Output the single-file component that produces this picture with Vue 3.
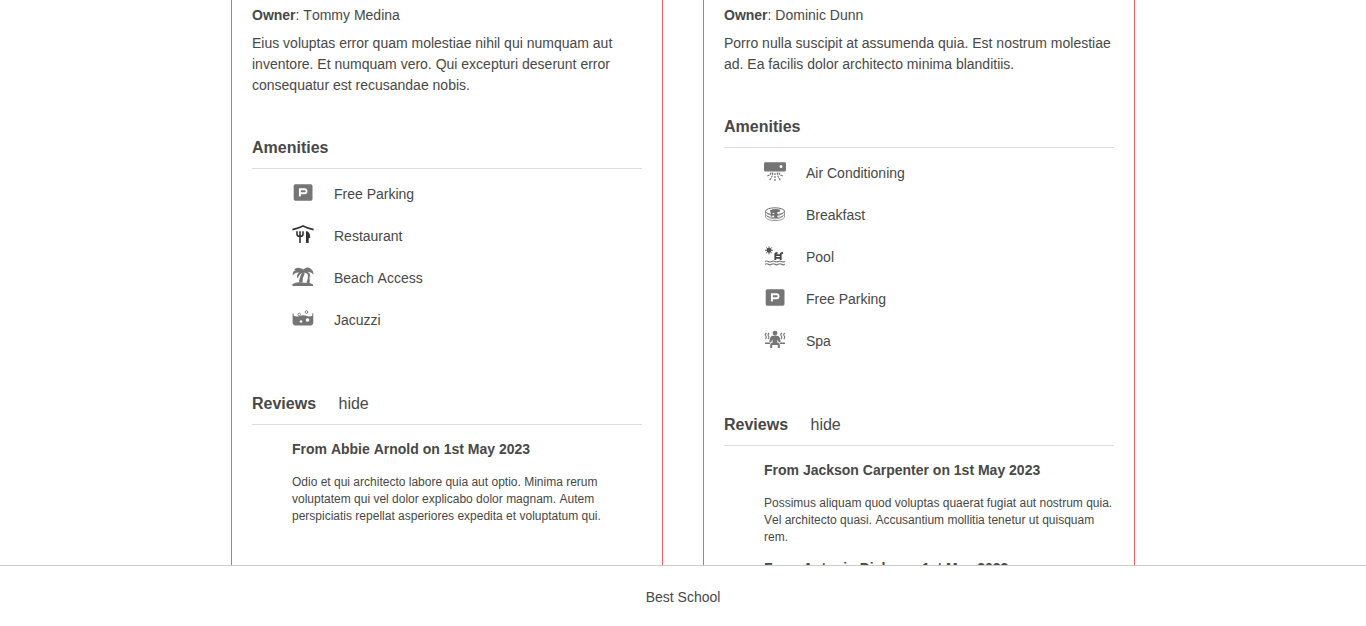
<script setup>
const places = [
  {
    owner: 'Tommy Medina',
    text: 'Eius voluptas error quam molestiae nihil qui numquam aut inventore. Et numquam vero. Qui excepturi deserunt error consequatur est recusandae nobis.',
    amenities: [
      ['parking', 'Free Parking'],
      ['restaurant', 'Restaurant'],
      ['beach', 'Beach Access'],
      ['jacuzzi', 'Jacuzzi'],
    ],
    reviews: [
      {
        title: 'From Abbie Arnold on 1st May 2023',
        text: 'Odio et qui architecto labore quia aut optio. Minima rerum voluptatem qui vel dolor explicabo dolor magnam. Autem perspiciatis repellat asperiores expedita et voluptatum qui.',
      },
    ],
  },
  {
    owner: 'Dominic Dunn',
    text: 'Porro nulla suscipit at assumenda quia. Est nostrum molestiae ad. Ea facilis dolor architecto minima blanditiis.',
    amenities: [
      ['air', 'Air Conditioning'],
      ['breakfast', 'Breakfast'],
      ['pool', 'Pool'],
      ['parking', 'Free Parking'],
      ['spa', 'Spa'],
    ],
    reviews: [
      {
        title: 'From Jackson Carpenter on 1st May 2023',
        text: 'Possimus aliquam quod voluptas quaerat fugiat aut nostrum quia. Vel architecto quasi. Accusantium mollitia tenetur ut quisquam rem.',
      },
      { title: 'From Antonio Dicks on 1st May 2023', text: '' },
    ],
  },
]
</script>

<template>
  <div class="page">
    <main class="places">
      <article v-for="place in places" :key="place.owner" class="place">
        <p class="owner"><b>Owner</b>: {{ place.owner }}</p>
        <p class="description">{{ place.text }}</p>

        <section class="amenities">
          <h2>Amenities</h2>
          <ul>
            <li v-for="[icon, label] in place.amenities" :key="icon">
              <svg class="icon" viewBox="0 0 22 22" aria-hidden="true">
                <g v-if="icon === 'parking'">
                  <rect x="1.7" y="2.3" width="18.8" height="16.4" rx="1.6" fill="#757575" />
                  <path d="M7.900 14.500V7.300h4.700a1.900 1.900 0 0 1 0 3.900H8" fill="none" stroke="#fff" stroke-width="1.900" />
                </g>
                <g v-else-if="icon === 'restaurant'" fill="none" stroke="#333">
                  <path d="M.4 5.600Q6 4.300 11 1.900q5 2.400 10.600 3.700" stroke-width="1.700" />
                  <path d="M5 7.300v2.900q0 2.200 3 2.200t3-2.200V7.300M8 7.300V19" stroke-width="1.600" />
                  <path d="M14 7.300h1.200q3 1.600 3 6.200l-1.500 1V19H14z" fill="#333" stroke="none" />
                </g>
                <g v-else-if="icon === 'beach'" fill="#757575">
                  <path d="M11.400 3.600Q15-.2 19 3q2.700 1.700 2.600 5.600-2.600-3-6.300-2.800 3.800 1.800 2.800 6-1.700-4.200-5.500-5-4.200-.1-6.200 4-.6 1.300-.7 1.800-2.100-3.600 1.400-6.100-4.200-.4-6.300 3Q.1 5.400 3.900 4.100 2.900 3.500 1.700 3.800 5.700-.4 11.400 3.600z" />
                  <path d="m10.600 6.500 2.200.9q-2.600 4.300-2.200 9H7q.4-6 3.600-9.900z" />
                  <path d="M.4 20v-1.800q4-2.600 9.300-1.600 1.900.4 4.800.5 2-5 1.400-10.500 2.400 4.500 1.700 10.300l3.200 1.300.5 1.800z" />
                </g>
                <g v-else-if="icon === 'jacuzzi'">
                  <path d="M.6 5.200v9.400q0 2.800 2.900 2.800h14.900q2.900 0 2.900-2.800V5.200h-1v2.600q-3 1.200-6 0t-5.800 0-6.900 0V5.200z" fill="#757575" />
                  <circle cx="14.500" cy="4" r="1.300" fill="#fff" stroke="#757575" stroke-width=".9" />
                  <circle cx="7.200" cy="6.500" r="1.300" fill="#fff" stroke="#757575" stroke-width=".8" />
                  <circle cx="15.500" cy="12" r="1.800" fill="#fff" />
                  <circle cx="9" cy="13.500" r="1.200" fill="#fff" />
                </g>
                <g v-else-if="icon === 'air'">
                  <path d="M1.200 1.200h19.600Q22 1.200 22 2.400v6.600q0 1.600-1.600 1.600H1.600Q0 10.600 0 9V2.400Q0 1.200 1.200 1.200z" fill="#757575" />
                  <circle cx="17" cy="5.400" r="1.500" fill="#fff" />
                  <path d="M7 11.600q-.2 2.200-3.900 3.400M8.700 11.600q-.1 4.400-3.500 8M13.300 11.600q.1 4.400 3.500 8M15 11.600q.2 2.200 3.900 3.400M11 11.900V20" fill="none" stroke="#757575" stroke-width="1.200" stroke-dasharray="2.200 .8" />
                </g>
                <g v-else-if="icon === 'breakfast'" fill="none" stroke="#757575">
                  <ellipse cx="11" cy="8.200" rx="9.500" ry="3.400" stroke-width="1" />
                  <path d="M1.500 8.200v6.100Q4 17.600 11 17.600t9.500-3.300V8.200M1.500 11.300Q4 14.700 11 14.700t9.500-3.400M3 13.300q3 2.500 8 2.700 5-.2 8-2.700M3 10.400q3 2.100 8 2.500 5-.4 8-2.500" stroke-width=".7" />
                  <path d="M5.700 7.500q5-2.500 10.900-.7l-1.100 2-2.100.3v6H10.200V9.800l-1.900.6v3H6.900v-3.300z" fill="#707070" stroke="none" />
                </g>
                <g v-else-if="icon === 'pool'" fill="none" stroke="#555">
                  <circle cx="5" cy="5.300" r="2.400" fill="#444" stroke="none" />
                  <path d="M5 1.300v8M1 5.300h8M2.200 2.500l5.600 5.600M7.800 2.500 2.200 8.100" stroke-width="1" />
                  <path d="M11.300 15V9.500q0-1.700 2.300-1.700M16.700 15V9.500q0-1.700 2.300-1.700M11.500 10.200h5M11.500 12.800h5" stroke="#444" stroke-width="1.800" />
                  <path d="M1 16.500q1.700-1.100 3.300 0t3.300 0 3.300 0 3.300 0 3.300 0 3.300 0M1 19.300q1.700-1.100 3.300 0t3.300 0 3.300 0 3.300 0 3.300 0 3.300 0" stroke="#757575" stroke-width="1.100" />
                </g>
                <g v-else fill="#757575">
                  <circle cx="11" cy="4.100" r="2.400" />
                  <path d="M7.500 7q3.500-1 7 0 2.300 2 2.200 5.800l-1.900.7-1.100-3.300-.5 3.200q2.800.5 2.600 2.400V19h-2v-3H8.200v3h-2v-3.200q-.2-1.900 2.600-2.400l-.5-3.200-1.100 3.300-1.900-.7Q5.200 9 7.500 7z" />
                  <path d="M1 13.500h5v1.600H1zM16 13.500h5v1.600h-5z" />
                  <path d="M2.400 4q-1.800 1.500-.6 3t-.4 3M5.100 4q-1.800 1.500-.6 3t-.4 3M17.900 4q-1.800 1.500-.6 3t-.4 3M20.800 4Q19 5.500 20.200 7t-.4 3" fill="none" stroke="#757575" stroke-width="1.100" />
                </g>
              </svg>
              <span>{{ label }}</span>
            </li>
          </ul>
        </section>

        <section class="reviews">
          <h2>Reviews <span class="toggle">hide</span></h2>
          <div v-for="review in place.reviews" :key="review.title" class="review">
            <h3>{{ review.title }}</h3>
            <p v-if="review.text">{{ review.text }}</p>
          </div>
        </section>
      </article>
    </main>
    <footer>Best School</footer>
  </div>
</template>

<style>
body {
  overflow: hidden;
  background: #fff;
}
</style>

<style scoped>
.page {
  display: flex;
  flex-direction: column;
  height: 626px;
  color: #484848;
  font: 14px/21px Helvetica, "Liberation Sans", Arial, sans-serif;
  font-kerning: none;
}
.places {
  display: flex;
  flex: 1;
  justify-content: center;
  gap: 40px;
  min-height: 0;
  overflow: hidden;
}
.place {
  box-sizing: border-box;
  width: 432px;
  padding: 5px 20px 0;
  border: solid #ff5a5f;
  border-width: 0 1px;
}
p, h2, h3, ul {
  margin: 0;
  padding: 0;
}
.description {
  margin-top: 7px;
}
h2 {
  padding-bottom: 8px;
  border-bottom: 1px solid #dddddd;
  font-size: 16px;
  line-height: 24px;
}
.amenities {
  margin-top: 40px;
}
.amenities ul {
  padding: 4px 0 0 40px;
  list-style: none;
}
li {
  display: flex;
  align-items: center;
  gap: 20px;
  height: 42px;
}
.icon {
  width: 22px;
  height: 22px;
  margin-top: -2px;
}
.reviews {
  margin-top: 51px;
}
.toggle {
  margin-left: 18px;
  font-weight: 400;
}
.review {
  padding: 14px 0 0 40px;
}
.review + .review {
  padding-top: 12px;
}
h3 {
  font-size: 14px;
  line-height: 21px;
}
.review p {
  margin-top: 14px;
  font-size: 12px;
  line-height: 17px;
}
footer {
  box-sizing: border-box;
  height: 61px;
  border-top: 1px solid #cccccc;
  line-height: 62px;
  text-align: center;
}
</style>
